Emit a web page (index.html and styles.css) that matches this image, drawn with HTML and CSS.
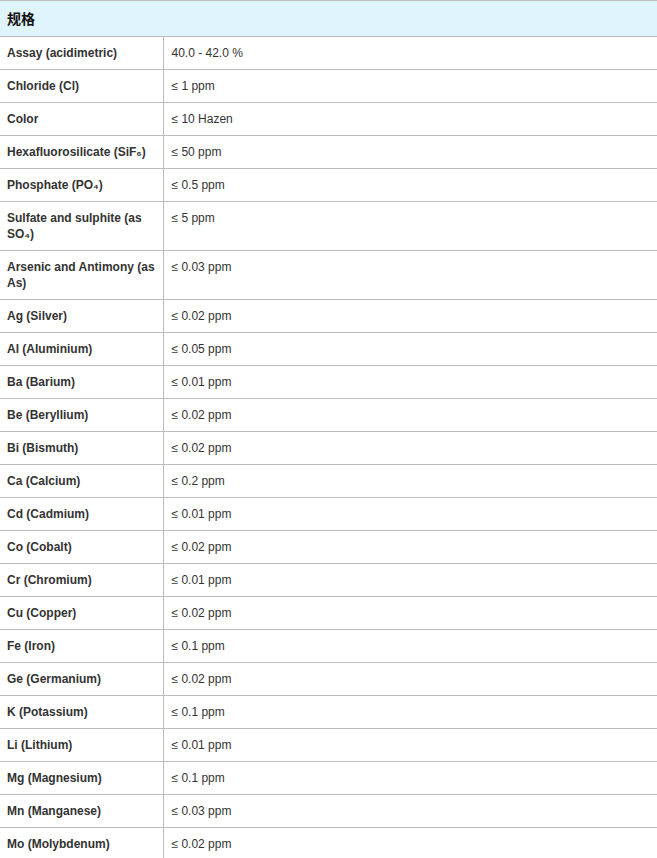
FILE: index.html
```html
<!DOCTYPE html>
<html lang="zh">
<head>
<meta charset="utf-8">
<title>规格</title>
<link rel="stylesheet" href="styles.css">
</head>
<body>
<table class="spec">
  <colgroup>
    <col class="col-label">
    <col class="col-value">
  </colgroup>
  <thead>
    <tr><th colspan="2" class="spec-head">规格</th></tr>
  </thead>
  <tbody>
    <tr><td class="label">Assay (acidimetric)</td><td class="value">40.0 - 42.0 %</td></tr>
    <tr><td class="label">Chloride (Cl)</td><td class="value">≤ 1 ppm</td></tr>
    <tr><td class="label">Color</td><td class="value">≤ 10 Hazen</td></tr>
    <tr><td class="label">Hexafluorosilicate (SiF₆)</td><td class="value">≤ 50 ppm</td></tr>
    <tr><td class="label">Phosphate (PO₄)</td><td class="value">≤ 0.5 ppm</td></tr>
    <tr><td class="label">Sulfate and sulphite (as SO₄)</td><td class="value">≤ 5 ppm</td></tr>
    <tr><td class="label">Arsenic and Antimony (as As)</td><td class="value">≤ 0.03 ppm</td></tr>
    <tr><td class="label">Ag (Silver)</td><td class="value">≤ 0.02 ppm</td></tr>
    <tr><td class="label">Al (Aluminium)</td><td class="value">≤ 0.05 ppm</td></tr>
    <tr><td class="label">Ba (Barium)</td><td class="value">≤ 0.01 ppm</td></tr>
    <tr><td class="label">Be (Beryllium)</td><td class="value">≤ 0.02 ppm</td></tr>
    <tr><td class="label">Bi (Bismuth)</td><td class="value">≤ 0.02 ppm</td></tr>
    <tr><td class="label">Ca (Calcium)</td><td class="value">≤ 0.2 ppm</td></tr>
    <tr><td class="label">Cd (Cadmium)</td><td class="value">≤ 0.01 ppm</td></tr>
    <tr><td class="label">Co (Cobalt)</td><td class="value">≤ 0.02 ppm</td></tr>
    <tr><td class="label">Cr (Chromium)</td><td class="value">≤ 0.01 ppm</td></tr>
    <tr><td class="label">Cu (Copper)</td><td class="value">≤ 0.02 ppm</td></tr>
    <tr><td class="label">Fe (Iron)</td><td class="value">≤ 0.1 ppm</td></tr>
    <tr><td class="label">Ge (Germanium)</td><td class="value">≤ 0.02 ppm</td></tr>
    <tr><td class="label">K (Potassium)</td><td class="value">≤ 0.1 ppm</td></tr>
    <tr><td class="label">Li (Lithium)</td><td class="value">≤ 0.01 ppm</td></tr>
    <tr><td class="label">Mg (Magnesium)</td><td class="value">≤ 0.1 ppm</td></tr>
    <tr><td class="label">Mn (Manganese)</td><td class="value">≤ 0.03 ppm</td></tr>
    <tr><td class="label">Mo (Molybdenum)</td><td class="value">≤ 0.02 ppm</td></tr>
  </tbody>
</table>
</body>
</html>
```

FILE: styles.css
```css
html, body {
  margin: 0;
  padding: 0;
  background: #ffffff;
}

body {
  font-family: "Liberation Sans", Arial, "Noto Sans CJK SC", sans-serif;
  font-size: 12px;
  color: #333333;
}

.spec {
  width: 657px;
  border-collapse: collapse;
  table-layout: fixed;
}

.col-label {
  width: 163px;
}

.spec-head {
  background: #dff4fb;
  border-top: 1px solid #bcbcbc;
  border-bottom: 1px solid #bcbcbc;
  text-align: left;
  font-family: "Noto Sans CJK SC", "Liberation Sans", sans-serif;
  font-size: 14px;
  font-weight: bold;
  color: #111111;
  height: 36px;
  padding: 0 7px;
  box-sizing: border-box;
  line-height: 19px;
}

.spec td {
  border-bottom: 1px solid #bcbcbc;
  vertical-align: top;
  line-height: 16px;
  padding: 8px 7px 8px 7px;
}

.spec .label {
  font-weight: bold;
  border-right: 1px solid #bcbcbc;
}

.spec .value {
  padding-left: 8px;
}
```
